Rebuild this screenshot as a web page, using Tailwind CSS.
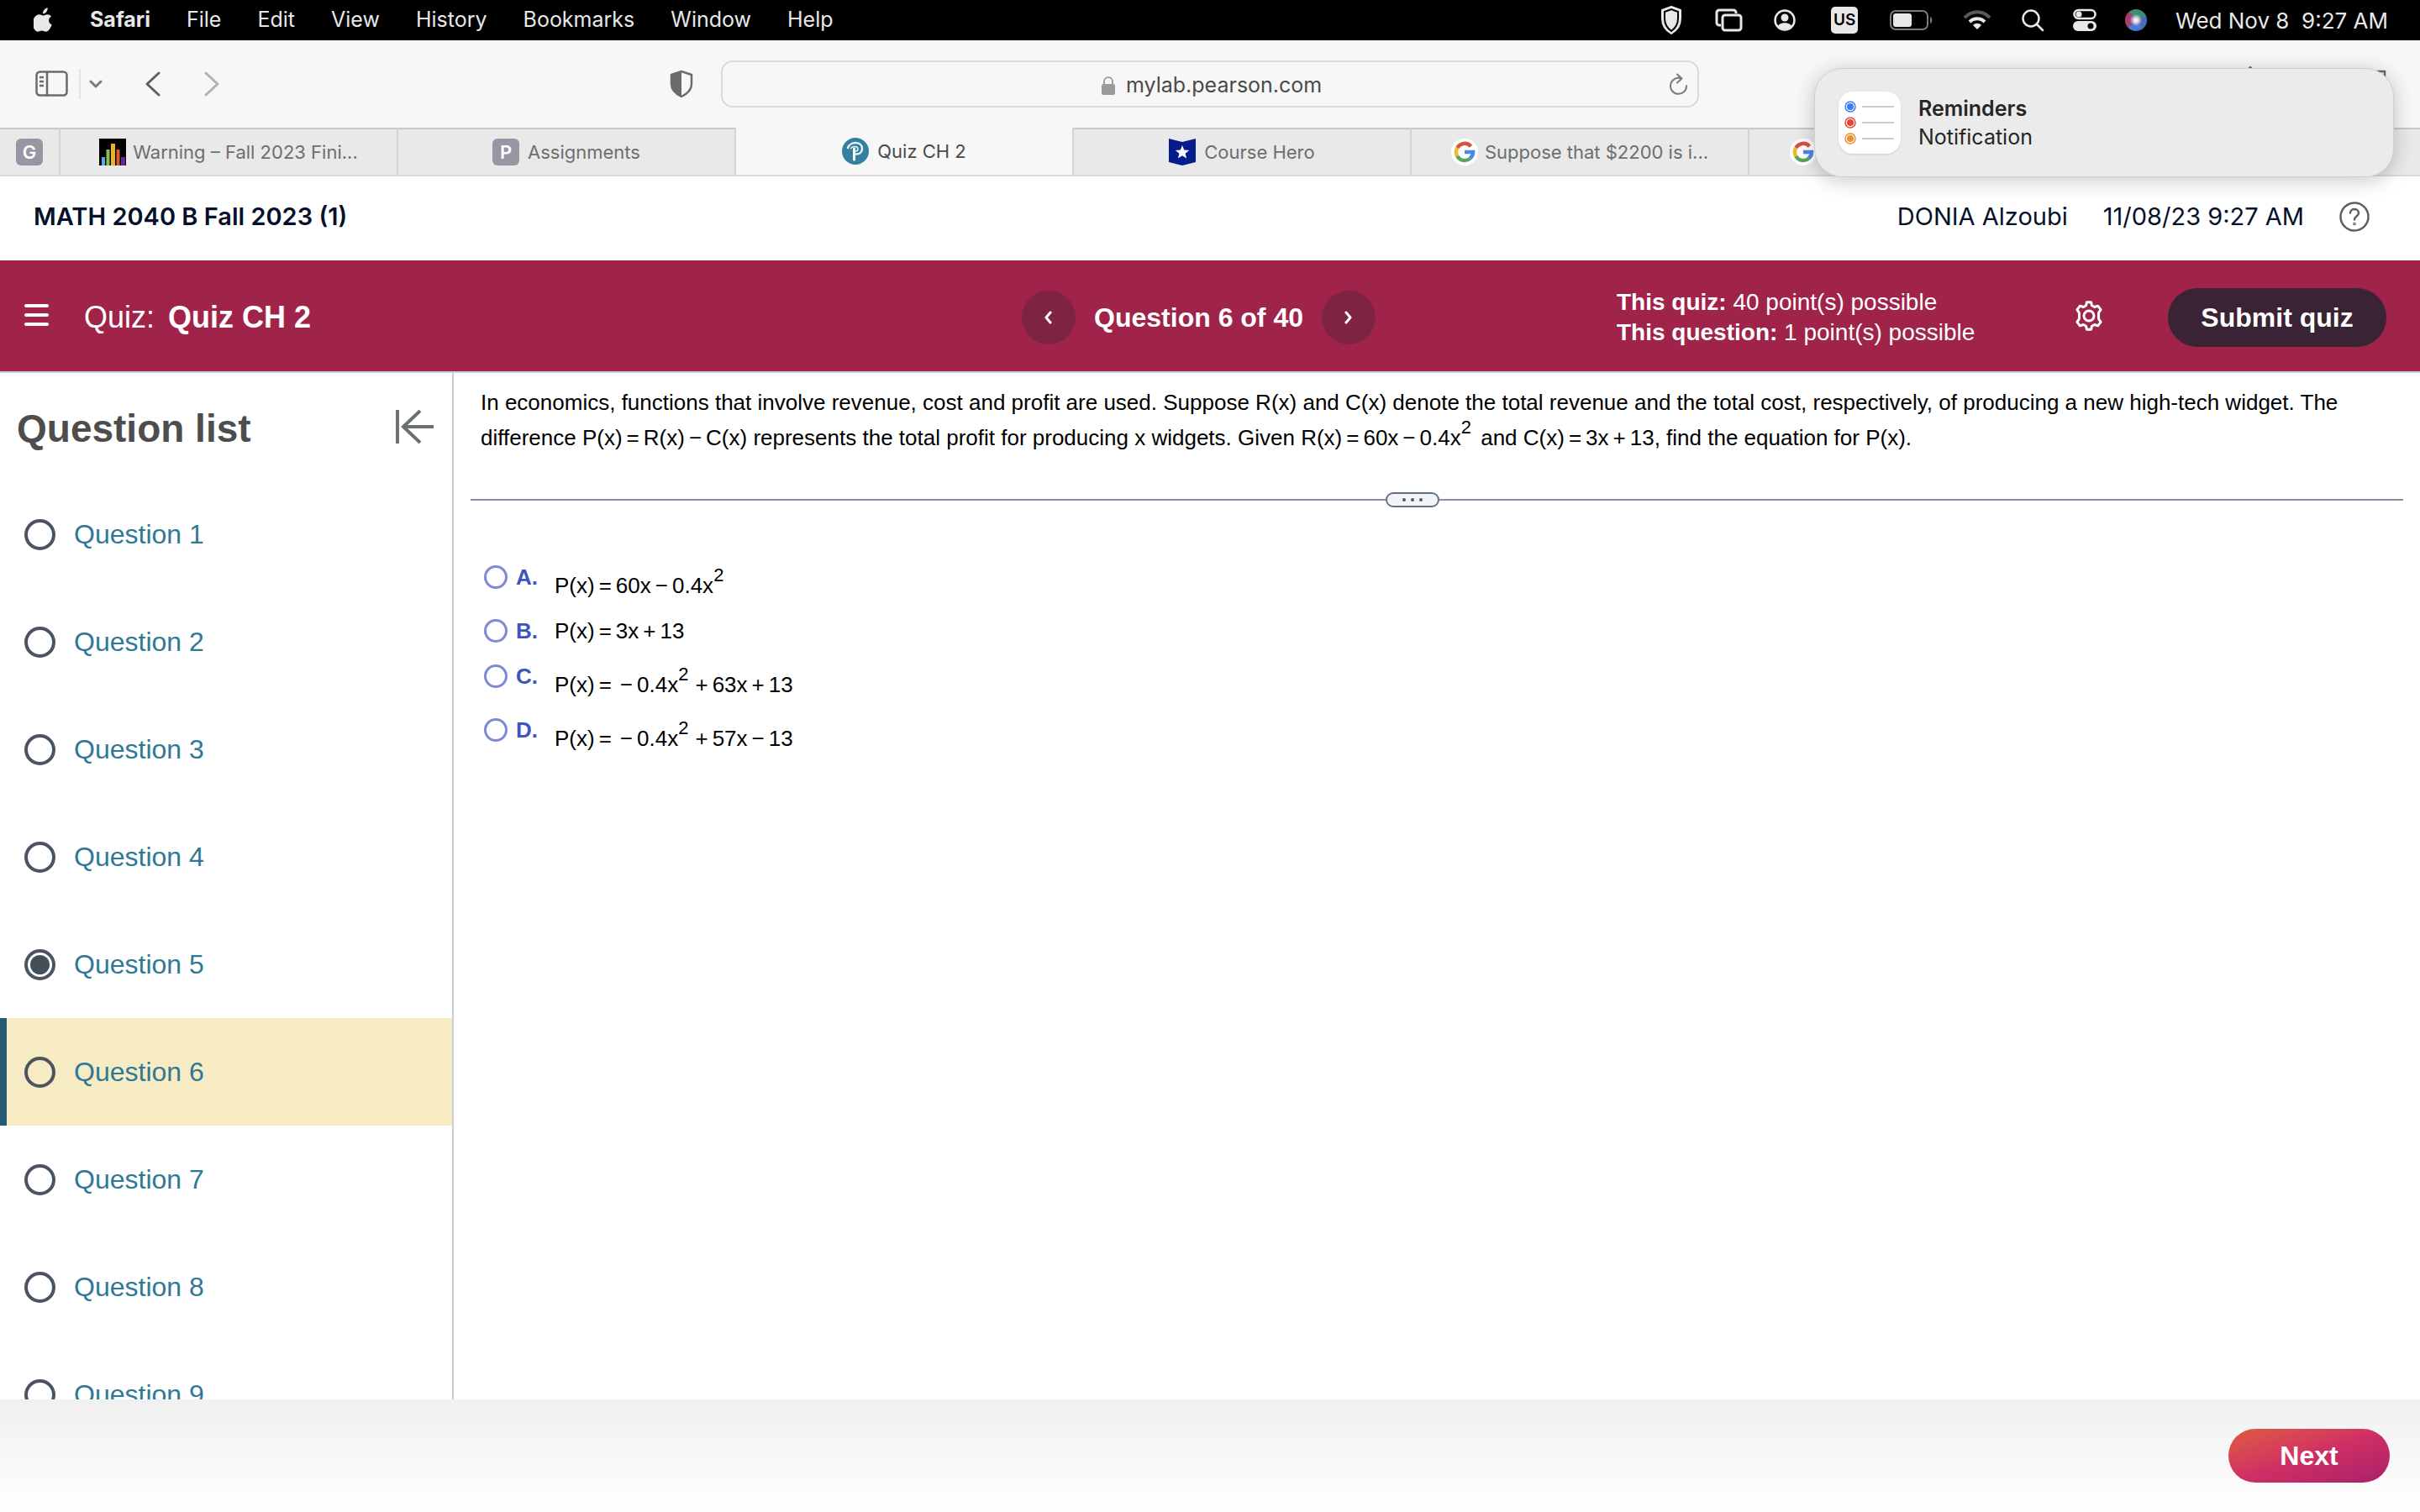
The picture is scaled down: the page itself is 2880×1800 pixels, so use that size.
<!DOCTYPE html>
<html lang="en">
<head>
<meta charset="utf-8">
<title>Quiz CH 2</title>
<script src="https://cdn.jsdelivr.net/npm/@tailwindcss/browser@4"></script>
</head>
<body class="relative flex h-screen flex-col overflow-hidden bg-white font-['Liberation_Sans',Arial,sans-serif] text-black">

<!-- Menu bar -->
<header class="flex h-12 shrink-0 items-center justify-between bg-black pr-[38px] pl-10 font-[Inter,sans-serif] text-[25px] text-[#e8e8e8]">
  <nav class="flex items-center gap-[43px]" aria-label="Menu bar">
    <svg class="h-8 w-6" viewBox="0 0 26 32" fill="#e8e8e8"><path d="M18 0c.3 2-.5 4-1.600 5.400C15.200 6.900 13.500 7.800 12 7.700c-.2-2 .6-3.900 1.700-5.200C14.800 1.100 16.600.2 18 0zM22.800 11c-2 1.200-3.200 3-3.200 5.200 0 2.600 1.500 4.700 3.900 5.600-.5 1.700-1.300 3.300-2.300 4.800-1.400 2.100-2.900 4.200-5.100 4.200-2.200.1-2.900-1.300-5.400-1.300s-3.300 1.300-5.400 1.300c-2.100.1-3.700-2.200-5.100-4.300C-1.300 22.500-2 14.500 2.400 10.900c1.400-1.400 3.100-2.200 4.900-2.200 2 0 3.300 1.300 5.300 1.300 1.900 0 2.900-1.300 5.500-1.300 1.700 0 3.500.9 4.700 2.300z"/></svg>
    <a href="#" class="font-bold">Safari</a>
    <a href="#">File</a>
    <a href="#">Edit</a>
    <a href="#">View</a>
    <a href="#">History</a>
    <a href="#">Bookmarks</a>
    <a href="#">Window</a>
    <a href="#">Help</a>
  </nav>
  <div class="flex items-center gap-[34px]">
    <svg class="h-9 w-8" viewBox="0 0 32 36" fill="none"><path d="M14 2 3 6v10c0 8 4 14 11 18 7-4 11-10 11-18V6z" fill="#e8e8e8" stroke="#e8e8e8" stroke-width="2" stroke-linejoin="round"/><path d="M14 5 6 8v8c0 6.500 2.500 11 8 15 5.500-4 8-8.500 8-15V8z" stroke="#000" stroke-width="2"/></svg>
    <svg class="h-7 w-9" viewBox="0 0 36 28" fill="none" stroke="#e8e8e8" stroke-width="3"><path d="M7 20H5a3 3 0 0 1-3-3V5a3 3 0 0 1 3-3h17a3 3 0 0 1 3 3v1"/><rect x="9" y="8" width="22" height="18" rx="3"/></svg>
    <svg class="h-7 w-[34px]" viewBox="0 0 34 28"><circle cx="13" cy="14" r="11.500" fill="none" stroke="#e8e8e8" stroke-width="2.500"/><circle cx="13" cy="11" r="4.500" fill="#e8e8e8"/><path d="M5 21c2-5 14-5 16 0-4 5-12 5-16 0z" fill="#e8e8e8"/></svg>
    <span class="w-9"><span class="flex h-8 w-8 items-center justify-center rounded-[5px] bg-[#e8e8e8] text-[19px] font-semibold text-black">US</span></span>
    <svg class="h-6 w-[54px]" viewBox="0 0 54 24"><rect x="1" y="1" width="44" height="22" rx="6" fill="none" stroke="#7d7d7d" stroke-width="2"/><rect x="4" y="4" width="22" height="16" rx="3" fill="#e8e8e8"/><path d="M48 8c3 1 3 7 0 8z" fill="#7d7d7d"/></svg>
    <svg class="h-6 w-[34px]" viewBox="0 0 34 24" fill="none" stroke-width="4"><path d="M1 9C10 0 22 0 31 9" stroke="#5a5a5a"/><path d="M7 14c5-5 13-5 18 0" stroke="#e8e8e8"/><path d="M16 23l-5-5c3-3 7-3 10 0z" fill="#e8e8e8"/></svg>
    <svg class="h-7 w-7" viewBox="0 0 28 28" fill="none" stroke="#e8e8e8" stroke-width="2.500" stroke-linecap="round"><circle cx="12" cy="12" r="9.500"/><path d="m19 19 7 7"/></svg>
    <svg class="h-7 w-7" viewBox="0 0 28 28"><rect x="1.500" y="2" width="25" height="10" rx="5" fill="none" stroke="#e8e8e8" stroke-width="2.500"/><circle cx="7" cy="7" r="3.500" fill="#e8e8e8"/><rect x="0" y="15" width="28" height="12" rx="6" fill="#e8e8e8"/><circle cx="21" cy="21" r="3.500" fill="#000"/></svg>
    <svg class="h-[26px] w-[26px]" viewBox="0 0 26 26"><defs><radialGradient id="orb"><stop offset="0" stop-color="#fff"/><stop offset=".3" stop-color="#fff" stop-opacity=".8"/><stop offset=".8" stop-color="#fff" stop-opacity="0"/></radialGradient><linearGradient id="orb2" x1="0" y1="0.300" x2="1" y2="0.600"><stop offset="0" stop-color="#c22f5f"/><stop offset=".45" stop-color="#7a5a86"/><stop offset="1" stop-color="#3575c4"/></linearGradient></defs><circle cx="13" cy="13" r="13" fill="url(#orb2)"/><path d="M5 4c5-5 12-5 16 0 2 2 3 4 3.500 6C18 10 10 9 5 4z" fill="#3a8f72"/><path d="M4 21c4-3 9-4 16-1-4 7-12 7-16 1z" fill="#3f7fe0"/><circle cx="13" cy="13" r="9" fill="url(#orb)"/></svg>
    <span class="text-[26px] whitespace-pre">Wed Nov 8  9:27 AM</span>
  </div>
</header>

<!-- Browser toolbar -->
<div class="grid h-[104px] shrink-0 grid-cols-[1fr_1164px_1fr] items-center bg-[#f7f7f7] font-[Inter,sans-serif] text-[25px] text-[#4a4a4a]">
  <div class="flex items-center pl-[42px]">
    <button class="mr-3" aria-label="Sidebar"><svg class="h-8 w-10" viewBox="0 0 40 32" fill="none" stroke="#6b6b6b" stroke-width="2.500"><rect x="1.500" y="1.500" width="36" height="28" rx="4"/><path d="M14 2v28M5 8h5M5 13h5M5 18h5"/></svg></button>
    <span class="h-9 w-[2px] bg-[#e4e4e4]"></span>
    <button class="ml-[10px]" aria-label="Tab groups"><svg class="h-4 w-4" viewBox="0 0 16 16" fill="none" stroke="#7b7b7b" stroke-width="3" stroke-linecap="round" stroke-linejoin="round"><path d="m2 5 6 6 6-6"/></svg></button>
    <button class="ml-[50px]" aria-label="Back"><svg class="h-8 w-5" viewBox="0 0 20 32" fill="none" stroke="#5f5f5f" stroke-width="3" stroke-linecap="round" stroke-linejoin="round"><path d="M17 3 3 16l14 13"/></svg></button>
    <button class="ml-[50px]" aria-label="Forward"><svg class="h-8 w-5" viewBox="0 0 20 32" fill="none" stroke="#b3b3b3" stroke-width="3" stroke-linecap="round" stroke-linejoin="round"><path d="m3 3 14 13L3 29"/></svg></button>
    <button class="mr-[33px] ml-auto" aria-label="Privacy report"><svg class="h-[34px] w-7" viewBox="0 0 28 34"><path d="M14 2 2 6v11c0 7 4 11 12 15 8-4 12-8 12-15V6z" fill="none" stroke="#6b6b6b" stroke-width="2.500" stroke-linejoin="round"/><path d="M14 2 2 6v11c0 7 4 11 12 15z" fill="#6b6b6b"/></svg></button>
  </div>
  <div class="flex h-14 items-center rounded-[14px] border-2 border-[#d9d9d9] pt-1 pr-[10px]">
    <label class="flex flex-1 items-center justify-center gap-3 pl-11">
      <svg class="h-6 w-[18px]" viewBox="0 0 18 24"><path d="M4 11V7a5 5 0 0 1 10 0v4" fill="none" stroke="#a0a0a0" stroke-width="2"/><rect x="1" y="10" width="16" height="13" rx="2" fill="#9b9b9b"/></svg>
      <input class="w-[240px] bg-transparent outline-none" type="text" value="mylab.pearson.com" aria-label="Address">
    </label>
    <button class="mb-1" aria-label="Reload"><svg class="h-[26px] w-6" viewBox="0 0 24 26" fill="none" stroke="#7b7b7b" stroke-width="2" stroke-linecap="round" stroke-linejoin="round"><path d="M15 6.500A9.500 9.500 0 1 0 21 15M10 1.500l5.500 5L10 11.500"/></svg></button>
  </div>
</div>

<!-- Tabs -->
<nav class="flex h-[58px] shrink-0 overflow-hidden border-b-2 border-[#d9d9d9] bg-[#e9e9e9] font-[Inter,sans-serif] text-[22px] text-[#6e6e6e]" aria-label="Tabs">
  <a href="#" class="flex w-[72px] shrink-0 items-center justify-center border-t-2 border-r-2 border-t-[#c9c9c9] border-r-[#d4d4d4]"><span class="flex h-8 w-8 items-center justify-center rounded-md bg-[#9796a3] font-semibold text-white">G</span></a>
  <a href="#" class="flex w-[402px] shrink-0 items-center justify-center gap-2 border-t-2 border-r-2 border-t-[#c9c9c9] border-r-[#d4d4d4]">
    <svg class="h-8 w-8" viewBox="0 0 32 32"><path d="M0 0h32v32H0z"/><path d="M3 22h4v10H3z" fill="#4bb0e8"/><path d="M8.500 13h4v19h-4z" fill="#8dbf45"/><path d="M14 6h5v26h-5z" fill="#eab12c"/><path d="M20.500 13h4v19h-4z" fill="#dc5a2b"/><path d="M26 22h5v10h-5z" fill="#5b2e91"/></svg>
    Warning – Fall 2023 Fini...</a>
  <a href="#" class="flex w-[402px] shrink-0 items-center justify-center gap-[10px] border-t-2 border-r-2 border-t-[#c9c9c9] border-r-[#d4d4d4]"><span class="flex h-8 w-8 items-center justify-center rounded-md bg-[#9796a3] font-semibold text-white">P</span>Assignments</a>
  <a href="#" class="flex w-[402px] shrink-0 items-center justify-center gap-[10px] border-r-2 border-r-[#d4d4d4] bg-[#f7f7f7] text-[#4a4a4a]">
    <svg class="h-8 w-8" viewBox="0 0 32 32" fill="none"><circle cx="16" cy="16" r="16" fill="#357f9f"/><path d="M7 12C10 4 24 4 24 13c0 4-3 6.500-7 6.500" stroke="#e8f2f6" stroke-width="2.500" stroke-linecap="round"/><path d="M14.500 13v13" stroke="#fff" stroke-width="3" stroke-linecap="round"/><path d="M10.500 12.500c2-2.500 8-3 8.500.5.200 2-1 2.800-2.500 3" stroke="#e8f2f6" stroke-width="1.500" stroke-linecap="round"/></svg>
    Quiz CH 2</a>
  <a href="#" class="flex w-[402px] shrink-0 items-center justify-center gap-[10px] border-t-2 border-r-2 border-t-[#c9c9c9] border-r-[#d4d4d4]">
    <svg class="h-8 w-8" viewBox="0 0 32 32"><path d="m0 0 16 4L32 0v28l-16 4-16-4z" fill="#051c8c"/><path d="m16 8 2.200 5.500 6 .4-4.600 3.800 1.500 5.800-5.100-3.200-5.100 3.200 1.500-5.800-4.600-3.800 6-.4z" fill="#fff"/></svg>
    Course Hero</a>
  <a href="#" class="flex w-[402px] shrink-0 items-center justify-center gap-2 border-t-2 border-r-2 border-t-[#c9c9c9] border-r-[#d4d4d4]">
    <svg class="h-8 w-8" viewBox="0 0 32 32"><circle cx="16" cy="16" r="16" fill="#fff"/><g fill="none" stroke-width="4.500"><path d="M23.500 9.200A10 10 0 0 0 7.300 11" stroke="#d9513f"/><path d="M7.300 11a10 10 0 0 0 0 10" stroke="#efb733"/><path d="M7.300 21a10 10 0 0 0 15.200 2.600" stroke="#55a55a"/><path d="M22.500 23.600A10 10 0 0 0 26 16h-10" stroke="#4f86ec"/></g></svg>
    Suppose that $2200 is i...</a>
  <a href="#" class="flex w-[402px] shrink-0 items-center gap-[10px] border-t-2 border-r-2 border-t-[#c9c9c9] border-r-[#d4d4d4] pl-12">
    <svg class="h-8 w-8" viewBox="0 0 32 32"><circle cx="16" cy="16" r="16" fill="#fff"/><g fill="none" stroke-width="4.500"><path d="M23.500 9.200A10 10 0 0 0 7.300 11" stroke="#d9513f"/><path d="M7.300 11a10 10 0 0 0 0 10" stroke="#efb733"/><path d="M7.300 21a10 10 0 0 0 15.200 2.600" stroke="#55a55a"/><path d="M22.500 23.600A10 10 0 0 0 26 16h-10" stroke="#4f86ec"/></g></svg></a>
  <span class="flex-1 border-t-2 border-[#c9c9c9]"></span>
</nav>

<!-- Course header -->
<div class="flex h-[100px] shrink-0 items-center justify-between bg-white pr-[60px] pb-1 pl-10 font-[Inter,sans-serif] text-[29px] text-[#05112a]">
  <h1 class="font-semibold">MATH 2040 B Fall 2023 (1)</h1>
  <div class="flex items-center gap-[42px]">
    <span>DONIA Alzoubi</span>
    <span>11/08/23 9:27 AM</span>
    <button aria-label="Help"><svg class="h-9 w-9" viewBox="0 0 36 36" fill="none" stroke="#5c6262" stroke-width="2.500" stroke-linecap="round"><circle cx="18" cy="18" r="16.500"/><path d="M13 13.500c0-6 10-6 10 0 0 4-5 4-5 8"/><circle cx="18" cy="26.500" r=".6"/></svg></button>
  </div>
</div>

<!-- Quiz bar -->
<div class="flex h-[134px] shrink-0 items-center border-b-2 border-[#c9ced9] bg-[#a0234a] pt-1 pr-10 pl-7 text-white">
  <div class="flex flex-1 items-center">
    <button class="mr-10 mb-1" aria-label="Menu"><svg class="h-8 w-8" viewBox="0 0 32 32" stroke="#fff" stroke-width="4" stroke-linecap="round"><path d="M3 4h25M3 15h25M3 26h25"/></svg></button>
    <h2 class="text-4xl whitespace-nowrap">Quiz: <b class="ml-[6px]">Quiz CH 2</b></h2>
  </div>
  <div class="flex items-center gap-[22px]">
    <button class="flex h-16 w-16 items-center justify-center rounded-full bg-[#7f2344]" aria-label="Previous question"><svg class="h-4 w-4" viewBox="0 0 16 16" fill="none" stroke="#fff" stroke-width="3" stroke-linecap="round" stroke-linejoin="round"><path d="M10 2 5 8l5 6"/></svg></button>
    <span class="text-[32px] font-bold">Question 6 of 40</span>
    <button class="flex h-16 w-16 items-center justify-center rounded-full bg-[#7f2344]" aria-label="Next question"><svg class="h-4 w-4" viewBox="0 0 16 16" fill="none" stroke="#fff" stroke-width="3" stroke-linecap="round" stroke-linejoin="round"><path d="m5 2 5 6-5 6"/></svg></button>
  </div>
  <div class="ml-[287px] w-[544px] text-[28px] leading-9">
    <p><b>This quiz:</b> 40 point(s) possible</p>
    <p><b>This question:</b> 1 point(s) possible</p>
  </div>
  <button class="mr-[76px] mb-1" aria-label="Settings"><svg class="h-9 w-9" viewBox="0 0 24 24" fill="none" stroke="#fff" stroke-width="2" stroke-linejoin="round"><path d="M9.700 3.800 10.300 1.200h3.400l.6 2.600 2.100 1.200 2.700-.9 2.300 3-1.700 2.500v4.800l1.700 2.500-2.300 3-2.700-.9-2.100 1.200-.6 2.600h-3.400l-.6-2.600L7.600 19l-2.700.9-2.300-3 1.700-2.500V9.600L2.600 7.100l2.300-3 2.700.9z"/><circle cx="12" cy="12" r="4"/></svg></button>
  <button class="h-[70px] w-[260px] rounded-full bg-[#3a2334] text-[32px] font-bold">Submit quiz</button>
</div>

<!-- Workspace -->
<div class="flex min-h-0 flex-1">
  <aside class="w-[540px] shrink-0 overflow-hidden border-r-2 border-[#c9ced9]">
    <div class="flex h-32 items-center justify-between pr-[22px] pl-5">
      <h2 class="pt-1 text-[46px] font-bold text-[#4d4d4d]">Question list</h2>
      <button aria-label="Collapse list"><svg class="h-10 w-[46px]" viewBox="0 0 46 40" fill="none" stroke="#6a7070" stroke-width="4"><path d="M3 0v40M30 1 10 20l20 19M10 20h36"/></svg></button>
    </div>
    <ul class="text-[32px] text-[#2f7896]">
      <li><a href="#" class="flex h-32 items-center gap-[22px] pl-[29px]"><span class="h-[37px] w-[37px] rounded-full border-4 border-[#4b5562]"></span>Question 1</a></li>
      <li><a href="#" class="flex h-32 items-center gap-[22px] pl-[29px]"><span class="h-[37px] w-[37px] rounded-full border-4 border-[#4b5562]"></span>Question 2</a></li>
      <li><a href="#" class="flex h-32 items-center gap-[22px] pl-[29px]"><span class="h-[37px] w-[37px] rounded-full border-4 border-[#4b5562]"></span>Question 3</a></li>
      <li><a href="#" class="flex h-32 items-center gap-[22px] pl-[29px]"><span class="h-[37px] w-[37px] rounded-full border-4 border-[#4b5562]"></span>Question 4</a></li>
      <li><a href="#" class="flex h-32 items-center gap-[22px] pl-[29px]"><span class="h-[37px] w-[37px] rounded-full border-4 border-[#4b5562] p-[3px]"><span class="block h-full w-full rounded-full bg-[#434e5b]"></span></span>Question 5</a></li>
      <li><a href="#" aria-current="page" class="flex h-32 items-center gap-[22px] border-l-8 border-[#275b73] bg-[#f7ebc3] pl-[21px]"><span class="h-[37px] w-[37px] rounded-full border-4 border-[#4b5562]"></span>Question 6</a></li>
      <li><a href="#" class="flex h-32 items-center gap-[22px] pl-[29px]"><span class="h-[37px] w-[37px] rounded-full border-4 border-[#4b5562]"></span>Question 7</a></li>
      <li><a href="#" class="flex h-32 items-center gap-[22px] pl-[29px]"><span class="h-[37px] w-[37px] rounded-full border-4 border-[#4b5562]"></span>Question 8</a></li>
      <li><a href="#" class="flex h-32 items-center gap-[22px] pl-[29px]"><span class="h-[37px] w-[37px] rounded-full border-4 border-[#4b5562]"></span>Question 9</a></li>
    </ul>
  </aside>

  <main class="flex-1 px-5 pt-[14px] text-[26px]">
    <p class="h-32 px-3 leading-[42px]">In economics, functions that involve revenue, cost and profit are used. Suppose R(x) and C(x) denote the total revenue and the total cost, respectively, of producing a new high-tech widget. The<br>difference P(x)<span class="mx-[5px]">=</span>R(x)<span class="mx-[5px]">−</span>C(x) represents the total profit for producing x widgets. Given R(x)<span class="mx-[5px]">=</span>60x<span class="mx-[5px]">−</span>0.4x<sup class="-top-[14px] mr-1 text-[22px] leading-none">2</sup> and C(x)<span class="mx-[5px]">=</span>3x<span class="mx-[5px]">+</span>13, find the equation for P(x).</p>
    <div class="flex items-center">
      <span class="h-[2px] flex-[19] bg-[#8690a0]"></span>
      <button class="flex h-[18px] w-16 items-center justify-center gap-[6px] rounded-[9px] border-2 border-[#647382] bg-[#f3f5f7]" aria-label="Resize panel"><span class="h-1 w-1 rounded-full bg-[#555]"></span><span class="h-1 w-1 rounded-full bg-[#555]"></span><span class="h-1 w-1 rounded-full bg-[#555]"></span></button>
      <span class="h-[2px] flex-[20] bg-[#8690a0]"></span>
    </div>
    <fieldset class="px-4 pt-[65px] leading-9">
      <label class="flex h-16 items-start"><input type="radio" name="answer" class="mt-1 mr-[10px] h-7 w-7 appearance-none rounded-full border-3 border-[#7d8bd6] bg-white"><b class="w-[46px] text-[#4054c0]">A.</b><span class="pt-[10px]">P(x)<span class="mx-[5px]">=</span>60x<span class="mx-[5px]">−</span>0.4x<sup class="-top-[14px] text-[22px] leading-none">2</sup></span></label>
      <label class="flex h-[54px] items-start"><input type="radio" name="answer" class="mt-1 mr-[10px] h-7 w-7 appearance-none rounded-full border-3 border-[#7d8bd6] bg-white"><b class="w-[46px] text-[#4054c0]">B.</b><span>P(x)<span class="mx-[5px]">=</span>3x<span class="mx-[5px]">+</span>13</span></label>
      <label class="flex h-16 items-start"><input type="radio" name="answer" class="mt-1 mr-[10px] h-7 w-7 appearance-none rounded-full border-3 border-[#7d8bd6] bg-white"><b class="w-[46px] text-[#4054c0]">C.</b><span class="pt-[10px]">P(x)<span class="mr-[10px] ml-[5px]">=</span><span class="mr-[5px]">−</span>0.4x<sup class="-top-[14px] text-[22px] leading-none">2</sup><span class="mr-[5px] ml-2">+</span>63x<span class="mx-[5px]">+</span>13</span></label>
      <label class="flex h-16 items-start"><input type="radio" name="answer" class="mt-1 mr-[10px] h-7 w-7 appearance-none rounded-full border-3 border-[#7d8bd6] bg-white"><b class="w-[46px] text-[#4054c0]">D.</b><span class="pt-[10px]">P(x)<span class="mr-[10px] ml-[5px]">=</span><span class="mr-[5px]">−</span>0.4x<sup class="-top-[14px] text-[22px] leading-none">2</sup><span class="mr-[5px] ml-2">+</span>57x<span class="mx-[5px]">−</span>13</span></label>
    </fieldset>
  </main>
</div>

<footer class="flex h-[134px] shrink-0 items-center justify-end bg-linear-to-b from-[#f0f0f0] to-white pr-9">
  <button class="h-16 w-48 rounded-full bg-linear-to-br from-[#df5a3c] via-[#d02f63] to-[#a8206c] text-[32px] font-bold text-white">Next</button>
</footer>

<!-- Toolbar icons that show past the notification's edge -->
<svg class="absolute top-[79px] right-[40px] h-8 w-[166px]" viewBox="0 0 166 32" fill="none" stroke="#6b6b6b" stroke-width="2.500"><path d="m0 6 4-5 4 5M146 6h18v20h-18z"/></svg>

<!-- Notification -->
<section class="absolute top-[81px] right-[31px] flex h-[130px] w-[690px] items-center gap-[21px] rounded-[34px] border border-[#cfcfcf] bg-[#ebebeb] px-7 font-[Inter,sans-serif] text-[25px] leading-[34px] text-[#262626] shadow-[0_4px_24px_rgba(0,0,0,0.22)]" role="status">
  <svg class="h-[74px] w-[74px] rounded-[17px] bg-white shadow-sm" viewBox="0 0 74 74"><g fill="none" stroke-width="1.500"><circle cx="14" cy="18" r="6" stroke="#3b7df0"/><circle cx="14" cy="37" r="6" stroke="#e1473c"/><circle cx="14" cy="56" r="6" stroke="#e8922f"/><path d="M28 18h38M28 37h38M28 56h38" stroke="#bcbcbc"/></g><circle cx="14" cy="18" r="4" fill="#3b7df0"/><circle cx="14" cy="37" r="4" fill="#e1473c"/><circle cx="14" cy="56" r="4" fill="#e8922f"/></svg>
  <div><p class="font-semibold">Reminders</p><p>Notification</p></div>
</section>
</body>
</html>
